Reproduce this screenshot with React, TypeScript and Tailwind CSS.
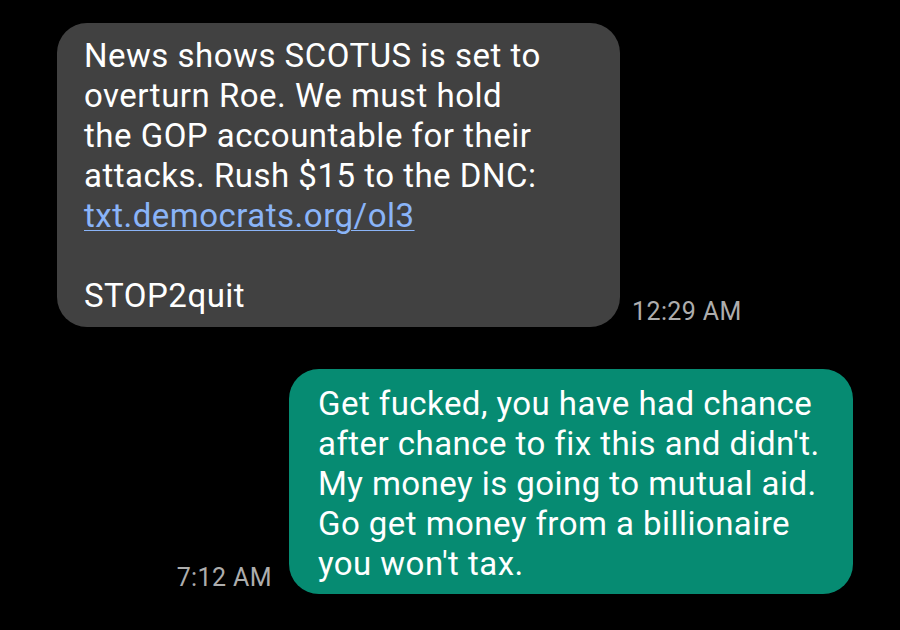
import React from 'react';

const incoming = [
  'News shows SCOTUS is set to',
  'overturn Roe. We must hold',
  'the GOP accountable for their',
  'attacks. Rush $15 to the DNC:',
];

const outgoing = [
  'Get fucked, you have had chance',
  "after chance to fix this and didn't.",
  'My money is going to mutual aid.',
  'Go get money from a billionaire',
  "you won't tax.",
];

export default function App() {
  return (
    <div className="w-[900px] h-[630px] bg-black overflow-hidden font-['Roboto',sans-serif] text-white">
      <div className="flex flex-col pt-[23px]">
        {/* incoming */}
        <div className="flex items-end pl-[57px]">
          <div className="w-[563px] h-[304px] bg-[#414141] rounded-[30px] pl-[27px] pt-[13px] text-[33px] leading-[40px] tracking-[0.5px] whitespace-nowrap">
            {incoming.map((l) => (
              <p key={l}>{l}</p>
            ))}
            <p className="text-[#8ab4f8] underline underline-offset-[3px] decoration-[1px]">txt.democrats.org/ol3</p>
            <p className="mt-[40px]">STOP2quit</p>
          </div>
          <span className="ml-[12px] mb-[1px] text-[25px] leading-[28px] tracking-[0.4px] text-[#adadad]">12:29 AM</span>
        </div>

        {/* outgoing */}
        <div className="flex items-end justify-end pr-[47px] mt-[42px]">
          <span className="mr-[17px] mb-[2px] text-[25px] leading-[28px] tracking-[0.4px] text-[#adadad]">7:12 AM</span>
          <div className="w-[564px] h-[225px] bg-[#068b72] rounded-[30px] pl-[29px] pt-[15px] text-[33px] leading-[40px] tracking-[0.45px] whitespace-nowrap">
            {outgoing.map((l) => (
              <p key={l}>{l}</p>
            ))}
          </div>
        </div>
      </div>
    </div>
  );
}
